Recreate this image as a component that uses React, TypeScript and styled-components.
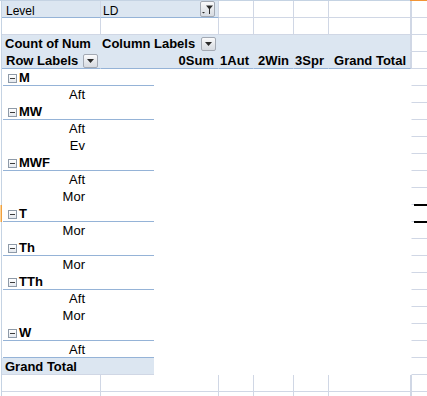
import React from "react";
import styled, { createGlobalStyle } from "styled-components";

const GRID = "#d0d7e5";
const BAND = "#dce6f1";
const RULE = "#95b3d7";
const HEAD = "#c5d3e3";

const Global = createGlobalStyle`
  html, body { margin: 0; padding: 0; background: #fff; }
  body { font-family: "Liberation Sans", Arial, sans-serif; color: #000; overflow: hidden; }
`;

const Sheet = styled.div`
  width: 427px;
  height: 396px;
  overflow: hidden;
  display: flex;
  flex-direction: column;
`;

const TopEdge = styled.div`
  display: flex;
  height: 1px;
  flex: none;
`;
const TopEdgeMain = styled.div`
  width: 410px;
  background: ${HEAD};
`;
const TopEdgeSelected = styled.div`
  flex: 1;
  background: #f29436;
`;

const Row = styled.div`
  display: flex;
  height: 17px;
  flex: none;
`;

const Edge = styled.div<{ $active?: boolean }>`
  width: 2px;
  flex: none;
  box-sizing: border-box;
  background: ${(p) => (p.$active ? "#fcd49a" : "#fff")};
  border-right: 1px solid ${(p) => (p.$active ? "#f0a040" : HEAD)};
`;

const BaseCell = styled.div<{ $w: number }>`
  box-sizing: border-box;
  width: ${(p) => p.$w}px;
  flex: none;
  height: 17px;
  display: flex;
  align-items: flex-start;
  white-space: nowrap;
  overflow: hidden;
`;

const GridCell = styled(BaseCell)`
  border-right: 1px solid ${GRID};
  border-bottom: 1px solid ${GRID};
`;

const PageCell = styled(BaseCell)<{ $pad: number }>`
  background: ${BAND};
  border-right: 1px solid ${GRID};
  border-bottom: 1px solid ${RULE};
  font-size: 12px;
  line-height: 16px;
  padding-left: ${(p) => p.$pad}px;
  padding-top: 2px;
  position: relative;
`;

const BandCell = styled(BaseCell)<{ $pad?: number; $end?: boolean; $last?: boolean; $rule?: boolean }>`
  background: ${BAND};
  border-right: 1px solid ${(p) => (p.$last ? GRID : BAND)};
  border-bottom: 1px solid ${(p) => (p.$rule ? RULE : BAND)};
  font-size: 13px;
  font-weight: bold;
  line-height: 16px;
  padding-top: 1px;
  padding-left: ${(p) => p.$pad ?? 0}px;
  padding-right: ${(p) => (p.$end ? 4 : 0)}px;
  justify-content: ${(p) => (p.$end ? "flex-end" : "flex-start")};
`;

const LabelArea = styled(BaseCell)<{ $rule?: boolean }>`
  border-bottom: 1px solid ${(p) => (p.$rule ? RULE : "#fff")};
  margin-left: 1px;
  width: 151px;
  font-size: 13px;
  line-height: 16px;
  padding-top: 1px;
`;

const TotalArea = styled(BaseCell)`
  background: ${BAND};
  border-bottom: 1px solid ${GRID};
  font-size: 13px;
  font-weight: bold;
  line-height: 16px;
  padding-top: 1px;
  padding-left: 3px;
`;

const Filler = styled(BaseCell)``;

const Spare = styled.div<{ $clear?: boolean }>`
  flex: 1;
  height: 17px;
  box-sizing: border-box;
  border-bottom: 1px solid ${GRID};
  border-left: 1px solid ${(p) => (p.$clear ? "#fff" : GRID)};
  position: relative;
`;

const ActiveFrame = styled.div`
  position: absolute;
  left: 2px;
  right: 0;
  top: -1px;
  height: 19px;
  box-sizing: border-box;
  border-top: 2px solid #000;
  border-bottom: 2px solid #000;
`;

const ItemText = styled.span`
  display: block;
  width: 82px;
  text-align: right;
`;

const GroupText = styled.span`
  font-weight: bold;
  margin-left: 2px;
`;

const MinusBox = styled.span`
  width: 9px;
  height: 9px;
  box-sizing: border-box;
  margin-left: 5px;
  margin-top: 4px;
  border: 1px solid #8e9aa8;
  background: linear-gradient(#ffffff, #e4e8ee);
  display: flex;
  align-items: center;
  justify-content: center;
  flex: none;
  &::after {
    content: "";
    width: 5px;
    height: 1px;
    background: #3c3c3c;
  }
`;

const FieldButton = styled.span<{ $h: number }>`
  width: 15px;
  height: ${(p) => p.$h}px;
  box-sizing: border-box;
  margin-left: auto;
  margin-right: 2px;
  margin-top: 1px;
  border: 1px solid #a3a9b3;
  border-radius: 2px;
  background: linear-gradient(#fbfbfc, #e3e6ea 60%, #d7dbe1);
  display: flex;
  align-items: center;
  justify-content: center;
  flex: none;
`;

const FilterSlot = styled.span`
  position: absolute;
  right: 1px;
  top: -1px;
  display: flex;
`;

const Arrow = () => (
  <svg width="7" height="4" viewBox="0 0 7 4">
    <polygon points="0,0 7,0 3.5,4" fill="#2a2a2a" />
  </svg>
);

const FilterIcon = () => (
  <svg width="13" height="11" viewBox="0 0 13 11">
    <polygon points="1,8 4,8 2.5,9.6" fill="#2a2a2a" />
    <polygon points="5,1.5 12,1.5 9,5 9,10 8,10 8,5" fill="#2a2a2a" />
  </svg>
);

const W = [99, 118, 35, 40, 35, 82];

const body: { kind: "group" | "item"; text: string }[] = [
  { kind: "group", text: "M" },
  { kind: "item", text: "Aft" },
  { kind: "group", text: "MW" },
  { kind: "item", text: "Aft" },
  { kind: "item", text: "Ev" },
  { kind: "group", text: "MWF" },
  { kind: "item", text: "Aft" },
  { kind: "item", text: "Mor" },
  { kind: "group", text: "T" },
  { kind: "item", text: "Mor" },
  { kind: "group", text: "Th" },
  { kind: "item", text: "Mor" },
  { kind: "group", text: "TTh" },
  { kind: "item", text: "Aft" },
  { kind: "item", text: "Mor" },
  { kind: "group", text: "W" },
  { kind: "item", text: "Aft" },
];

const columns = ["0Sum", "1Aut", "2Win", "3Spr", "Grand Total"];

const BlankGridRow = () => (
  <Row>
    <Edge />
    {W.map((w, i) => (
      <GridCell key={i} $w={w} />
    ))}
    <Spare />
  </Row>
);

export default function App() {
  return (
    <>
      <Global />
      <Sheet>
        <TopEdge>
          <TopEdgeMain />
          <TopEdgeSelected />
        </TopEdge>

        <Row>
          <Edge />
          <PageCell $w={W[0]} $pad={4}>Level</PageCell>
          <PageCell $w={W[1]} $pad={2}>
            LD
            <FilterSlot>
              <FieldButton $h={16}>
                <FilterIcon />
              </FieldButton>
            </FilterSlot>
          </PageCell>
          {W.slice(2).map((w, i) => (
            <GridCell key={i} $w={w} />
          ))}
          <Spare />
        </Row>

        <BlankGridRow />

        <Row>
          <Edge />
          <BandCell $w={W[0]} $pad={3}>Count of Num</BandCell>
          <BandCell $w={W[1]} $pad={1}>
            Column Labels
            <FieldButton $h={14}>
              <Arrow />
            </FieldButton>
          </BandCell>
          <BandCell $w={W[2]} />
          <BandCell $w={W[3]} />
          <BandCell $w={W[4]} />
          <BandCell $w={W[5]} $last />
          <Spare />
        </Row>

        <Row>
          <Edge />
          <BandCell $w={W[0]} $pad={4} $rule>
            Row Labels
            <FieldButton $h={14}>
              <Arrow />
            </FieldButton>
          </BandCell>
          {columns.map((c, i) => (
            <BandCell key={c} $w={W[i + 1]} $end $rule $last={i === columns.length - 1}>
              {c}
            </BandCell>
          ))}
          <Spare />
        </Row>

        {body.map((r, i) => {
          const active = i === 8;
          const rule = r.kind === "group" || i === body.length - 1;
          return (
            <Row key={i}>
              <Edge $active={active} />
              <LabelArea $w={151} $rule={rule}>
                {r.kind === "group" ? (
                  <>
                    <MinusBox />
                    <GroupText>{r.text}</GroupText>
                  </>
                ) : (
                  <ItemText>{r.text}</ItemText>
                )}
              </LabelArea>
              <Filler $w={257} />
              <Spare $clear>{active && <ActiveFrame />}</Spare>
            </Row>
          );
        })}

        <Row>
          <Edge />
          <TotalArea $w={152}>Grand Total</TotalArea>
          <Filler $w={257} />
          <Spare $clear />
        </Row>

        <BlankGridRow />
        <BlankGridRow />
      </Sheet>
    </>
  );
}
